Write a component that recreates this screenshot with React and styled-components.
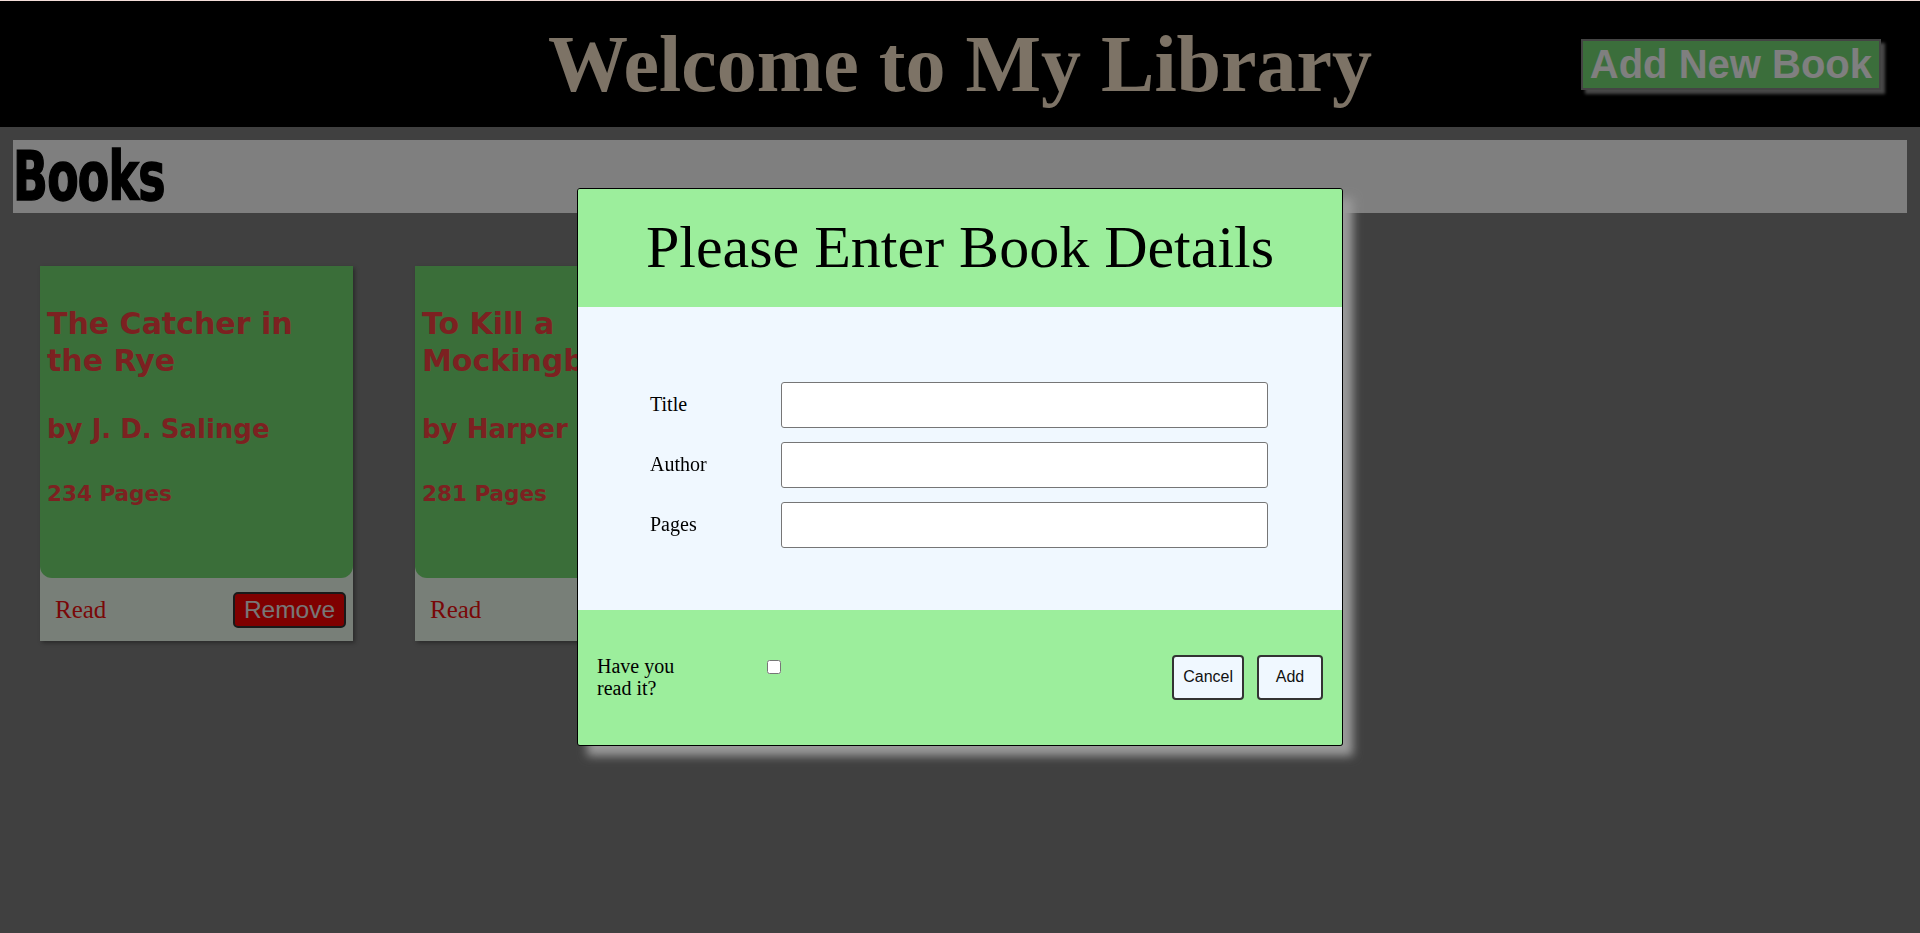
import styled, { createGlobalStyle } from "styled-components"

const books = [
    { title: "The Catcher in the Rye", author: "J. D. Salinge", pages: 234 },
    { title: "To Kill a Mockingbird", author: "Harper Lee", pages: 281 },
]

export default function App() {
    return (
        <>
            <GlobalStyle />
            <Page>
                <Header>
                    <Title>Welcome to My Library</Title>
                    <AddBookButton>Add New Book</AddBookButton>
                </Header>
                <Main>
                    <BooksBar>
                        <BooksHeading>Books</BooksHeading>
                    </BooksBar>
                    <CardList>
                        {books.map((book) => (
                            <Card key={book.title}>
                                <CardBody>
                                    <BookTitle>{book.title}</BookTitle>
                                    <BookAuthor>by {book.author}</BookAuthor>
                                    <BookPages>{book.pages} Pages</BookPages>
                                </CardBody>
                                <CardFooter>
                                    <ReadStatus>Read</ReadStatus>
                                    <RemoveButton>Remove</RemoveButton>
                                </CardFooter>
                            </Card>
                        ))}
                    </CardList>
                </Main>
            </Page>
            <Backdrop />
            <Modal>
                <ModalHeader>
                    <ModalTitle>Please Enter Book Details</ModalTitle>
                </ModalHeader>
                <Form>
                    <FieldLabel htmlFor="title">Title</FieldLabel>
                    <Input id="title" type="text" />
                    <FieldLabel htmlFor="author">Author</FieldLabel>
                    <Input id="author" type="text" />
                    <FieldLabel htmlFor="pages">Pages</FieldLabel>
                    <Input id="pages" type="text" />
                </Form>
                <ModalFooter>
                    <ReadField>
                        <ReadLabel htmlFor="read">Have you read it?</ReadLabel>
                        <Checkbox id="read" type="checkbox" />
                    </ReadField>
                    <Actions>
                        <ActionButton>Cancel</ActionButton>
                        <ActionButton>Add</ActionButton>
                    </Actions>
                </ModalFooter>
            </Modal>
        </>
    )
}

const GlobalStyle = createGlobalStyle`
    body{
        margin: 0;
        background: gray;
        overflow: hidden;
    }
    *{
        box-sizing: border-box;
    }
`

const Page = styled.div`
    min-height: 100vh;
    background: gray;
    border-top: 1px solid #f3ddd8;
`

const Header = styled.header`
    display: grid;
    grid-template-columns: 1fr auto 1fr;
    align-items: center;
    height: 126px;
    padding: 0 39px;
    background: black;
`

const Title = styled.h1`
    grid-column: 2;
    margin: 0;
    font-family: "Liberation Serif", serif;
    font-size: 80px;
    font-weight: 700;
    color: #fae6cc;
    white-space: nowrap;
`

const AddBookButton = styled.button`
    justify-self: end;
    height: 51px;
    padding: 0 7px;
    font-family: "Liberation Sans", Arial, sans-serif;
    font-size: 40px;
    font-weight: 700;
    line-height: 1;
    color: white;
    background: #76dc76;
    border: 2px solid #888;
    box-shadow: 4px 4px 3px #909090;
`

const Main = styled.main`
    padding: 13px;
`

const BooksBar = styled.div`
    height: 73px;
    background: white;
`

const BooksHeading = styled.h2`
    margin: 0;
    padding-top: 2px;
    font-family: Impact, "DejaVu Sans Condensed", "DejaVu Sans", sans-serif;
    font-size: 67px;
    font-weight: 700;
    line-height: 71px;
    letter-spacing: -1px;
    color: black;
    -webkit-text-stroke: 1.5px black;
    transform: scaleX(0.76);
    transform-origin: left;
`

const CardList = styled.div`
    display: flex;
    gap: 62px;
    padding: 53px 27px 0;
`

const Card = styled.div`
    width: 313px;
    display: flex;
    flex-direction: column;
    background: #f0fff0;
    box-shadow: 2px 2px 4px rgba(0, 0, 0, 0.35);
`

const CardBody = styled.div`
    height: 312px;
    padding: 39px 7px 0;
    background: #74dc72;
    border-radius: 0 0 12px 12px;
    color: #f84242;
    font-family: "DejaVu Sans", Verdana, sans-serif;
    font-weight: 700;
    >h3, >p{
        margin: 0;
    }
`

const BookTitle = styled.h3`
    font-size: 30px;
    line-height: 37px;
    margin-bottom: 35px !important;
`

const BookAuthor = styled.p`
    font-size: 26px;
    line-height: 30px;
    margin-bottom: 37px !important;
`

const BookPages = styled.p`
    font-size: 21.5px;
    line-height: 25px;
`

const CardFooter = styled.div`
    height: 63px;
    display: flex;
    align-items: center;
    justify-content: space-between;
    padding: 0 7px 0 15px;
`

const ReadStatus = styled.span`
    font-family: "Liberation Serif", serif;
    font-size: 25px;
    color: #f21010;
`

const RemoveButton = styled.button`
    width: 113px;
    height: 36px;
    padding: 0;
    font-family: "Liberation Sans", Arial, sans-serif;
    font-size: 24.5px;
    color: #eeeeee;
    background: red;
    border: 2px solid #333;
    border-radius: 5px;
`

const Backdrop = styled.div`
    position: fixed;
    top: 1px;
    left: 0;
    right: 0;
    bottom: 0;
    background: rgba(0, 0, 0, 0.5);
`

const Modal = styled.div`
    position: fixed;
    top: 50%;
    left: 50%;
    transform: translate(-50%, -50%);
    width: 766px;
    display: flex;
    flex-direction: column;
    border: 1px solid black;
    border-radius: 3px;
    overflow: hidden;
    box-shadow: 10px 10px 10px #9a9a9a;
    font-family: "Liberation Serif", serif;
`

const ModalHeader = styled.div`
    height: 118px;
    display: flex;
    align-items: center;
    justify-content: center;
    background: #9cee9c;
`

const ModalTitle = styled.h2`
    margin: 0;
    font-size: 60px;
    font-weight: 400;
    color: black;
`

const Form = styled.form`
    display: grid;
    grid-template-columns: 129px 1fr;
    grid-auto-rows: 46px;
    row-gap: 14px;
    align-items: center;
    height: 303px;
    padding: 75px 74px 0;
    background: aliceblue;
`

const FieldLabel = styled.label`
    font-size: 20px;
    color: black;
    margin-left: -2px;
`

const Input = styled.input`
    height: 46px;
    width: 100%;
    border: 1px solid #767676;
    border-radius: 3px;
    background: white;
`

const ModalFooter = styled.div`
    height: 135px;
    display: flex;
    align-items: center;
    justify-content: space-between;
    padding: 0 19px 0 19px;
    background: #9cee9c;
`

const ReadField = styled.div`
    display: flex;
    align-items: flex-start;
`

const ReadLabel = styled.label`
    width: 100px;
    margin-right: 66px;
    font-size: 20px;
    line-height: 22px;
    color: black;
`

const Checkbox = styled.input`
    width: 14px;
    height: 14px;
    margin: 5px 0 0 4px;
`

const Actions = styled.div`
    display: flex;
    gap: 13px;
`

const ActionButton = styled.button`
    min-width: 66px;
    height: 45px;
    padding: 0 9px;
    font-family: "Liberation Sans", Arial, sans-serif;
    font-size: 16px;
    color: #111;
    background: aliceblue;
    border: 2px solid #333;
    border-radius: 4px;
`
